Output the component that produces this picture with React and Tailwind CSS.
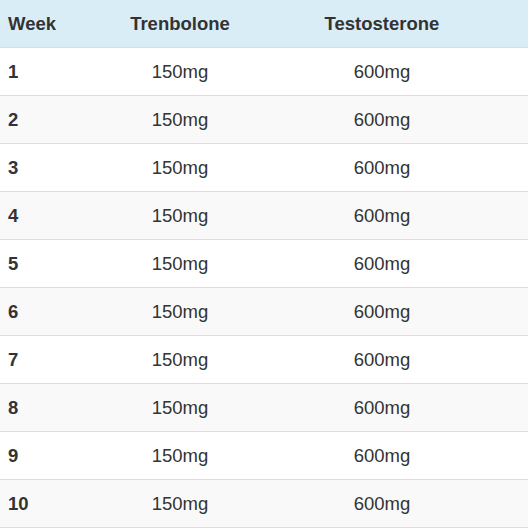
import React from "react";

const rows = Array.from({ length: 10 }, (_, i) => i + 1);

export default function App() {
  return (
    <div className="w-[528px] h-[531px] bg-white text-[#333] text-[18.5px]" style={{ fontFamily: '"Liberation Sans", Arial, sans-serif' }}>
      <div className="grid grid-cols-[124px_112px_1fr] h-[48px] pt-px bg-[#d9edf7] border-b border-[#dddddd] font-bold items-center">
        <div className="pl-2">Week</div>
        <div className="text-center">Trenbolone</div>
        <div className="text-center">Testosterone</div>
      </div>
      {rows.map((n) => (
        <div
          key={n}
          className={`grid grid-cols-[124px_112px_1fr] h-[48px] pt-px border-b border-[#dddddd] items-center ${n % 2 === 0 ? "bg-[#f9f9f9]" : "bg-white"}`}
        >
          <div className="pl-2 font-bold">{n}</div>
          <div className="text-center">150mg</div>
          <div className="text-center">600mg</div>
        </div>
      ))}
    </div>
  );
}
